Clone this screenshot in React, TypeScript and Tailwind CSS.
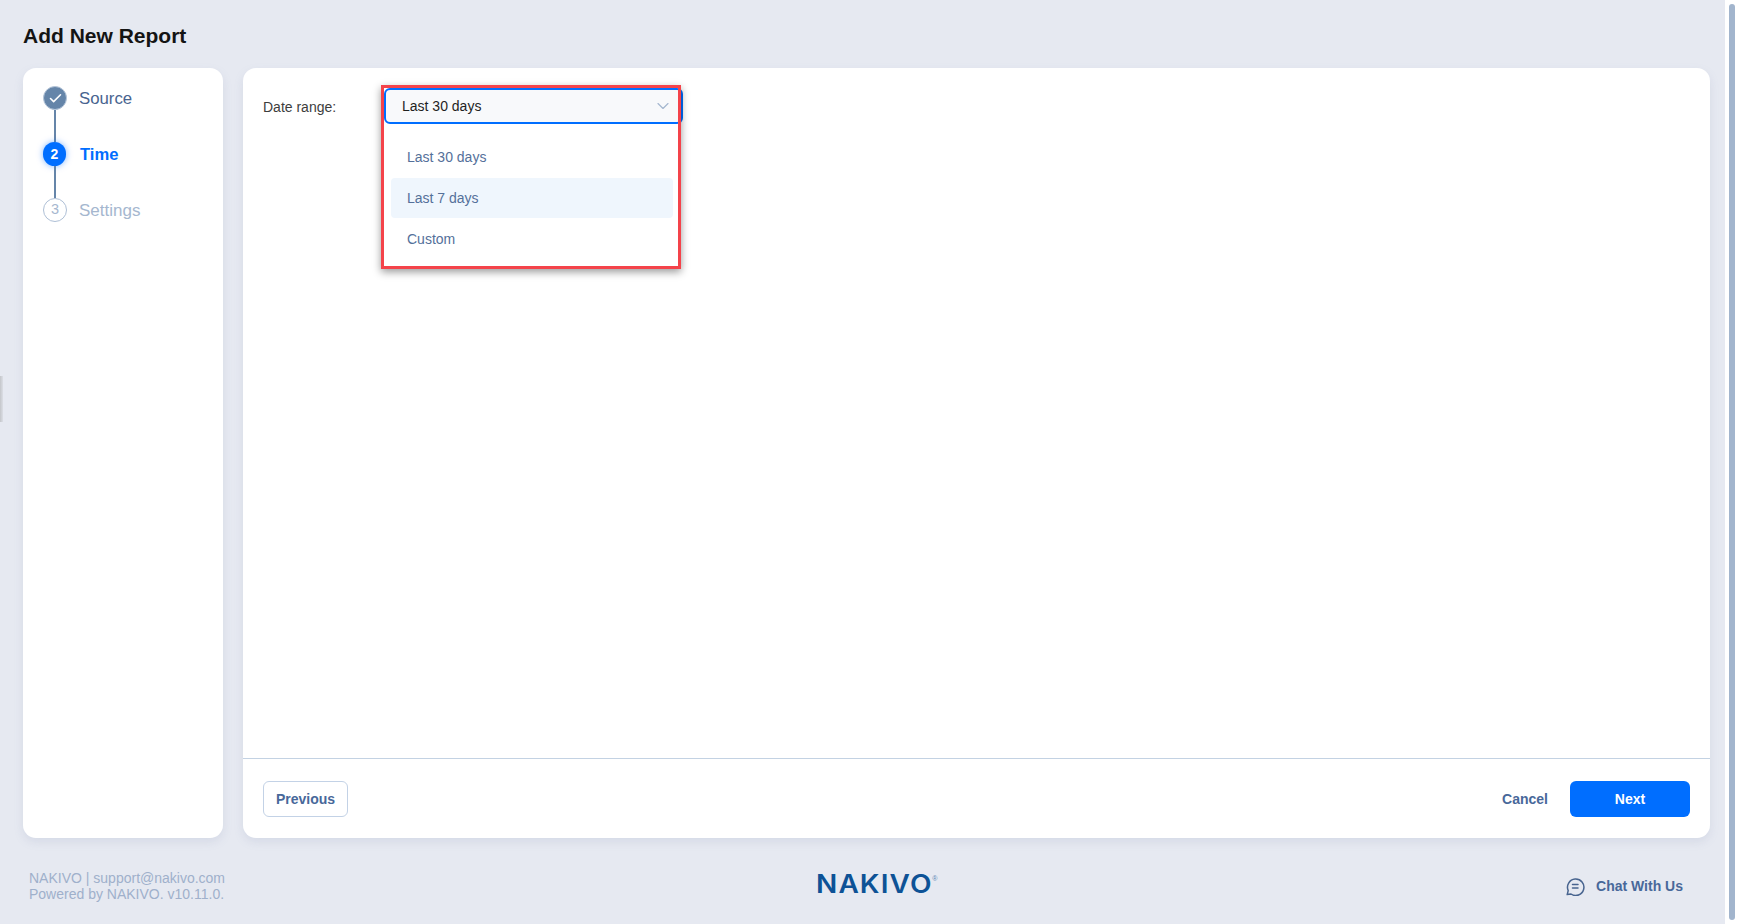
import { Check, ChevronDown } from "lucide-react";

function Stepper() {
  return (
    <div className="flex flex-col pl-[20px] pt-[18px]">
      <div className="flex items-center gap-[12px] h-[24px]">
        <div className="w-[24px] h-[24px] rounded-full bg-[#6585a9] border border-[#b5c5d9] flex items-center justify-center">
          <Check className="w-[15px] h-[15px] text-white" strokeWidth={2.5} />
        </div>
        <span className="pt-[2px] text-[16.8px] text-[#48648f]">Source</span>
      </div>
      <div className="w-[2px] h-[32px] bg-[#6585a9] ml-[11px]" />
      <div className="flex items-center gap-[14px] h-[24px]">
        <div className="w-[23px] h-[24px] rounded-full bg-[#006eff] shadow-[0_0_6px_rgba(0,110,255,0.5)] flex items-center justify-center text-white text-[14px] font-bold">
          2
        </div>
        <span className="pt-[2px] text-[16.6px] font-bold text-[#006eff]">Time</span>
      </div>
      <div className="w-[2px] h-[32px] bg-[#6585a9] ml-[11px]" />
      <div className="flex items-center gap-[12px] h-[24px]">
        <div className="w-[24px] h-[24px] rounded-full border border-[#aebfd6] bg-white flex items-center justify-center text-[#a5b7cf] text-[14.5px]">
          3
        </div>
        <span className="pt-[2px] text-[17px] text-[#a5b7cf]">Settings</span>
      </div>
    </div>
  );
}

function DateRange() {
  return (
    <div className="flex items-start pl-[20px] pt-[20px]">
      <div className="w-[121px] h-[38px] flex items-center text-[14px] text-[#3d3d3d]">Date range:</div>
      <div className="relative w-[299px]">
        <div className="h-[36px] rounded-[6px] border-2 border-[#006eff] bg-[#f8f9fb] flex items-center justify-between pl-[16px] pr-[8px] text-[14px] text-[#1f1f1f]">
          <span>Last 30 days</span>
          <ChevronDown className="w-[20px] h-[20px] text-[#a5b7cf]" strokeWidth={1.4} />
        </div>
        <div className="absolute left-0 top-[36px] w-[296px] h-[143px] bg-white pt-[2px]">
          <div className="flex flex-col pt-[11px] px-[7px] text-[14px] text-[#54709a]">
            <div className="h-[41px] pl-[16px] flex items-center">Last 30 days</div>
            <div className="h-[40px] pl-[16px] flex items-center bg-[#eff6fd] rounded-[4px]">Last 7 days</div>
            <div className="h-[42px] pl-[16px] flex items-center">Custom</div>
          </div>
        </div>
        <div className="absolute -left-[3px] -top-[3px] w-[300px] h-[184px] border-[3px] border-[#f4434a] shadow-[0_3px_8px_rgba(0,0,0,0.4)] pointer-events-none" />
      </div>
    </div>
  );
}

function ChatIcon() {
  return (
    <svg width="19" height="19" viewBox="0 0 19 19" fill="none" stroke="#48648f" strokeWidth="1.5" strokeLinecap="round" strokeLinejoin="round">
      <path d="M1.2 17.6 L5 17 A8.2 8.2 0 1 0 2.2 13.6 Z" />
      <path d="M6.5 7.6 H12" />
      <path d="M6.5 11 H12" />
    </svg>
  );
}

export default function App() {
  return (
    <div className="flex w-[1739px] h-[924px] overflow-hidden bg-[#e6e9f1] font-['Liberation_Sans',Arial,sans-serif]">
      <div className="relative flex flex-col w-[1725px] h-full pl-[23px] pr-[15px]">
        <div className="absolute left-0 top-[376px] w-[3px] h-[46px] bg-gradient-to-r from-[#c4c6ca] to-[#dcdfe6]" />
        <h1 className="h-[68px] pt-[24px] text-[21px] leading-[24px] font-bold text-[#141414]">Add New Report</h1>
        <div className="flex gap-[20px] h-[770px]">
          <aside className="w-[200px] bg-white rounded-[13px] shadow-[0_4px_10px_rgba(120,135,175,0.15)]">
            <Stepper />
          </aside>
          <main className="flex-1 flex flex-col bg-white rounded-[13px] shadow-[0_4px_10px_rgba(120,135,175,0.15)]">
            <div className="flex-1">
              <DateRange />
            </div>
            <div className="h-[80px] border-t border-[#c3d2e3] flex items-center justify-between px-[20px]">
              <button className="w-[85px] h-[36px] pt-[1px] rounded-[6px] border border-[#c3d2e6] text-[14px] font-bold text-[#48689a]">Previous</button>
              <div className="flex items-center gap-[22px]">
                <button className="pt-[1px] text-[14px] font-bold text-[#48689a]">Cancel</button>
                <button className="w-[120px] h-[36px] pt-[1px] rounded-[6px] bg-[#006eff] text-[14px] font-bold text-white">Next</button>
              </div>
            </div>
          </main>
        </div>
        <footer className="relative flex items-center justify-between flex-1 pl-[6px] pr-[27px] pt-[9px]">
          <div className="text-[14px] leading-[16px] text-[#9fb0cb]">
            <div>NAKIVO | support@nakivo.com</div>
            <div>Powered by NAKIVO. v10.11.0.</div>
          </div>
          <div className="absolute left-[793px] top-[34px] flex items-start text-[#0d5296]">
            <span className="font-['Inter',sans-serif] text-[25px] leading-[25px] font-semibold tracking-[1px] scale-x-[1.12] origin-left">NAKIVO</span>
            <span className="text-[7px] leading-[8px] text-[#5d87b5] ml-[12px] mt-[3px]">®</span>
          </div>
          <div className="flex items-center gap-[11px] pt-[1px] text-[14px] font-bold text-[#48689a]">
            <ChatIcon />
            <span>Chat With Us</span>
          </div>
        </footer>
      </div>
      <div className="w-[14px] h-full bg-white pl-[4px] py-[4px]">
        <div className="w-[6px] h-full rounded-[3px] bg-[#a2b5cd]" />
      </div>
    </div>
  );
}
